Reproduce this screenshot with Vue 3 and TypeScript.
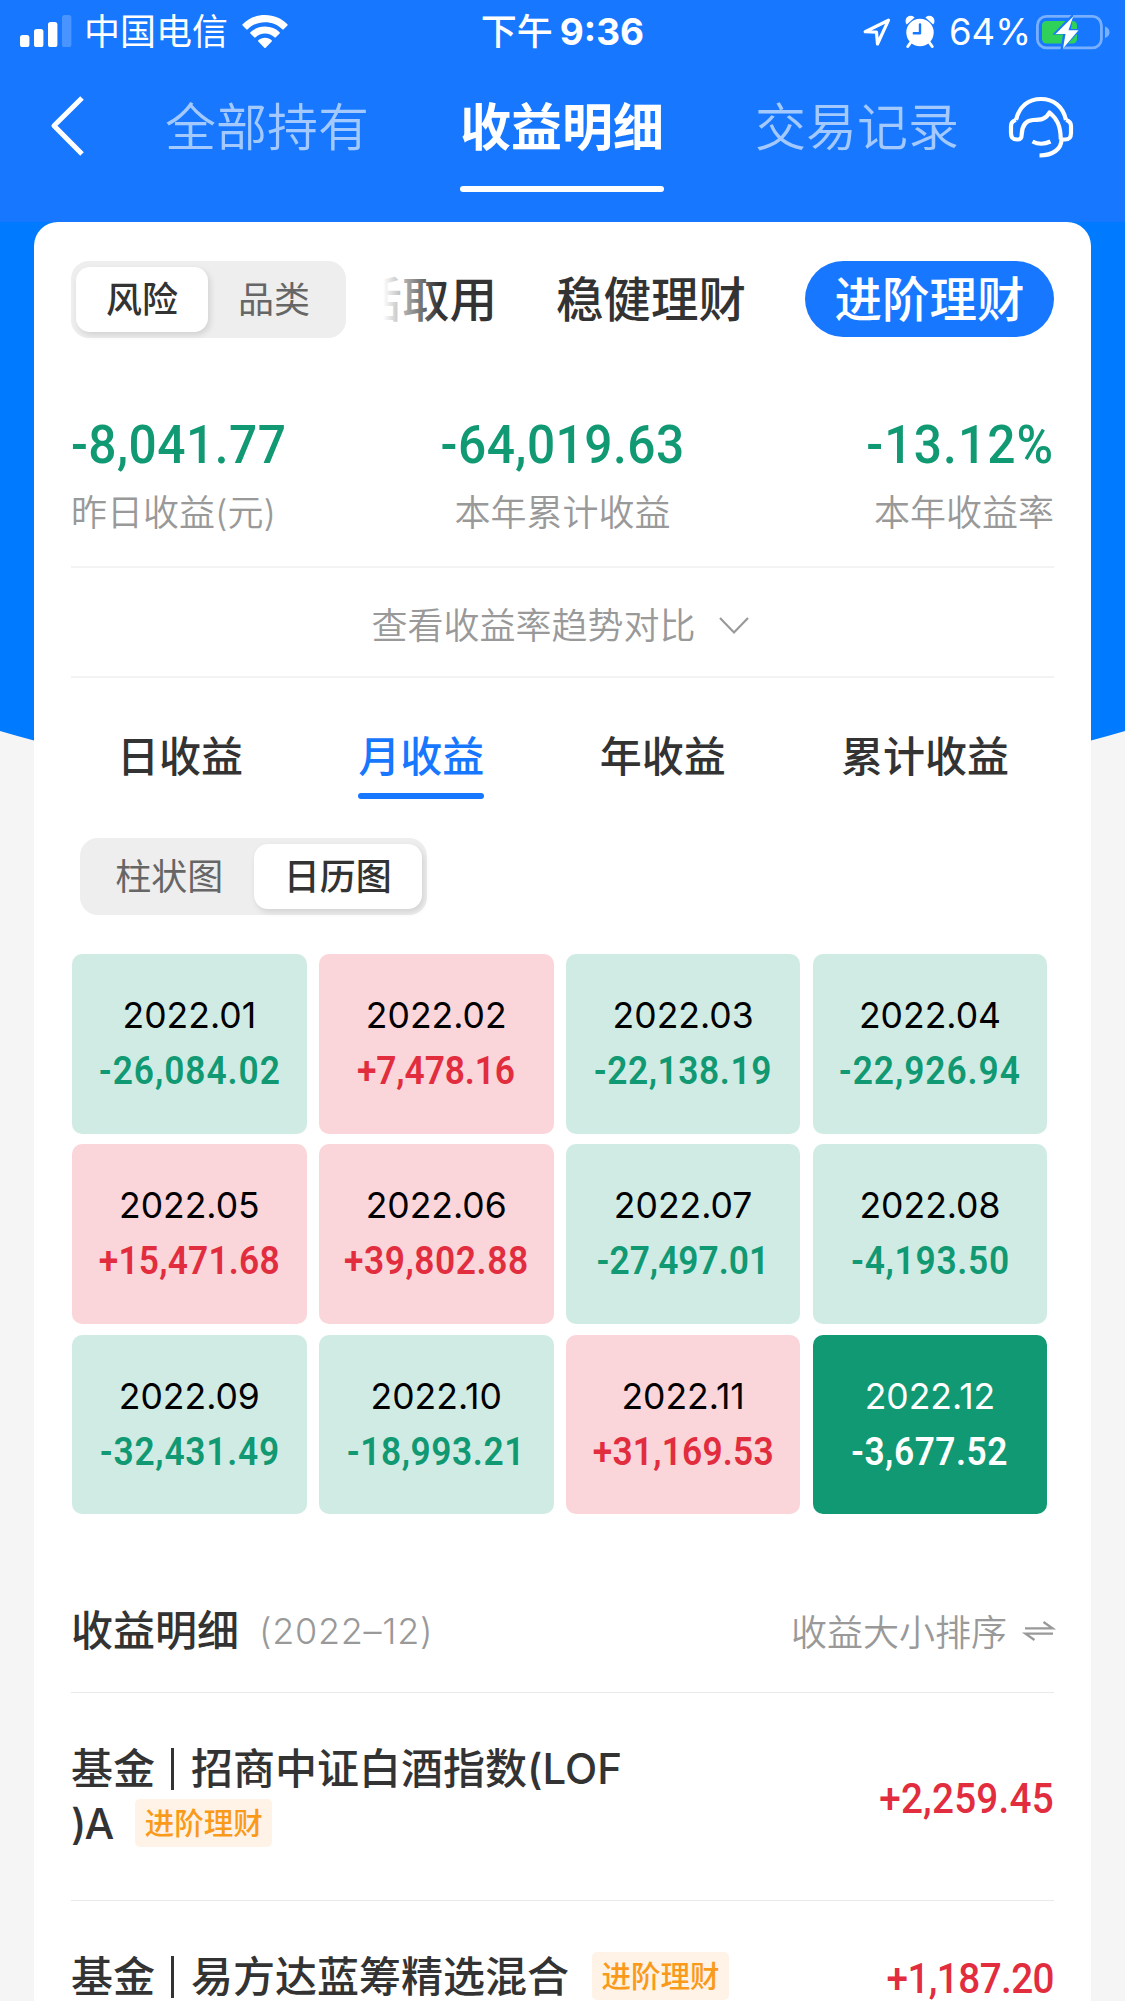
<script setup lang="ts">
interface Stat { value: string; label: string }
interface Month { month: string; amount: string; active?: boolean }
interface Fund { name: string[]; amount: string }

const stats: Stat[] = [
  { value: '-8,041.77', label: '昨日收益(元)' },
  { value: '-64,019.63', label: '本年累计收益' },
  { value: '-13.12%', label: '本年收益率' },
]

const periods: string[] = ['日收益', '月收益', '年收益', '累计收益']

const months: Month[] = [
  { month: '2022.01', amount: '-26,084.02' },
  { month: '2022.02', amount: '+7,478.16' },
  { month: '2022.03', amount: '-22,138.19' },
  { month: '2022.04', amount: '-22,926.94' },
  { month: '2022.05', amount: '+15,471.68' },
  { month: '2022.06', amount: '+39,802.88' },
  { month: '2022.07', amount: '-27,497.01' },
  { month: '2022.08', amount: '-4,193.50' },
  { month: '2022.09', amount: '-32,431.49' },
  { month: '2022.10', amount: '-18,993.21' },
  { month: '2022.11', amount: '+31,169.53' },
  { month: '2022.12', amount: '-3,677.52', active: true },
]

const funds: Fund[] = [
  { name: ['招商中证白酒指数(LOF', ')A'], amount: '+2,259.45' },
  { name: ['易方达蓝筹精选混合'], amount: '+1,187.20' },
]

const tone = (m: Month): string => (m.active ? 'active' : m.amount.startsWith('+') ? 'up' : 'down')

// Tightens amounts that hold narrow ones or a seven next to punctuation.
const tracking = (amount: string, base: number): string => {
  const ones = (amount.match(/1/g) ?? []).length
  const sevens = (amount.match(/7[,.]/g) ?? []).length
  const plus = amount.startsWith('+') ? 1 : 0
  return `${(base - (ones * 2 + sevens * 4 + plus * 4) / amount.length).toFixed(2)}px`
}
</script>

<template>
  <div class="app">
    <svg class="backdrop" width="1125" height="520" viewBox="0 0 1125 520">
      <path d="M0 0H1125V509Q1108 514 1091 518.5H34Q17 514 0 509Z" fill="#007aff" />
    </svg>

    <header class="header">
      <div class="status">
        <div class="status-left">
          <svg width="52" height="34" viewBox="0 0 52 34" fill="#fff">
            <rect x="0" y="20" width="9.4" height="12" rx="2.6" />
            <rect x="14" y="14" width="9.4" height="18" rx="2.6" />
            <rect x="28" y="7" width="9.4" height="25" rx="2.6" />
            <rect x="42" y="0" width="9.4" height="32" rx="2.6" opacity=".22" />
          </svg>
          <span class="carrier">中国电信</span>
          <svg class="wifi" width="46" height="34" viewBox="0 0 46 34" fill="#fff">
            <path d="M23 0C14 0 6 3.600 .6 9.300Q0 10 .6 10.600L4.300 14.300Q5 15 5.700 14.300C10.200 9.800 16.200 7.200 23 7.200S35.800 9.800 40.300 14.300Q41 15 41.700 14.300L45.400 10.600Q46 10 45.400 9.300C40 3.600 32 0 23 0Z" />
            <path d="M23 11.500C17 11.500 12 13.700 8.400 17.200Q7.800 18 8.400 18.600L12.200 22.300Q12.900 23 13.600 22.300C16 20 19.300 18.600 23 18.600S30 20 32.400 22.300Q33.100 23 33.800 22.300L37.600 18.600Q38.200 18 37.600 17.200C34 13.700 29 11.500 23 11.500Z" />
            <path d="M23 22.700C20.400 22.700 18 23.700 16.300 25.200Q15.700 26 16.300 26.600L22.300 32.700Q23 33.400 23.700 32.700L29.700 26.600Q30.300 26 29.700 25.200C28 23.700 25.600 22.700 23 22.700Z" />
          </svg>
        </div>
        <div class="clock">下午<b>9:36</b></div>
        <div class="status-right">
          <svg width="28" height="28" viewBox="0 0 28 28" fill="none" stroke="#fff" stroke-width="3.200" stroke-linejoin="round">
            <path d="M25.500 2.200L2.200 13.700L13.500 14.200L14.500 26Z" />
          </svg>
          <svg class="alarm" width="28" height="33" viewBox="0 0 28 33" fill="#fff">
            <path d="M.8 8.400A5 5 0 0 1 8.600 1.600Z" />
            <path d="M27.200 8.400A5 5 0 0 0 19.400 1.600Z" />
            <circle cx="14" cy="16.500" r="13.700" />
            <path d="M5 26L1.800 30.500M23 26L26.200 30.500" stroke="#fff" stroke-width="3" stroke-linecap="round" />
            <path d="M14 8.500V17.300H7.800" fill="none" stroke="#1777ff" stroke-width="2.400" stroke-linecap="round" stroke-linejoin="round" />
          </svg>
          <span class="percent">64%</span>
          <svg width="74" height="36" viewBox="0 0 74 36">
            <rect x="1.400" y="2.400" width="64" height="31.500" rx="9" fill="none" stroke="#fff" stroke-opacity=".42" stroke-width="2.800" />
            <path d="M69 12.500C72 13.500 73.500 15.500 73.500 18.200S72 23 69 24Z" fill="#fff" opacity=".42" />
            <rect x="6" y="7" width="35" height="22.500" rx="4.500" fill="#30d158" />
            <path d="M37.500 -1L16.500 20.500H27L24 38L45.500 15H35Z" fill="#1777ff" />
            <path d="M37.200 2.500L19.500 20H29.500L27 34.500L42.500 16.200H32.500Z" fill="#fff" />
          </svg>
        </div>
      </div>

      <nav class="nav">
        <svg class="back" width="36" height="60" viewBox="0 0 36 60" fill="none" stroke="#fff" stroke-width="5">
          <path d="M32 2L4 29.800L32 58" stroke-linejoin="round" />
        </svg>
        <span class="nav-tab first">全部持有</span>
        <span class="nav-tab current">收益明细</span>
        <span class="nav-tab last">交易记录</span>
        <svg class="service" width="66" height="66" viewBox="0 0 66 66" fill="none" stroke="#fff" stroke-width="4.200" stroke-linejoin="round">
          <path d="M8 24C11 10.500 20.500 3 33 3S55 10.500 58 24" />
          <path d="M8 24C4.500 25 3 26.500 3 30V37C3 42 5 43.500 9 43.500C12.500 43.500 13.700 42 13.700 38.500C14 29.500 18 24.500 25 24C33 24 38 23 41.500 16.500C49 23 52.500 29 52.800 43.500" />
          <path d="M58 24C61.500 25 63 26.500 63 30V37C63 42 61 43.500 57 43.500H53.500C53.500 53 45 59.500 31.500 59.500" />
          <path d="M24.500 45.500Q33 50 42.500 45.500" />
        </svg>
      </nav>
    </header>

    <main class="card">
      <div class="filters">
        <div class="segment risk">
          <span class="seg on">风险</span>
          <span class="seg">品类</span>
        </div>
        <div class="scroller">
          <span class="chip cut">活取用</span>
          <span class="chip">稳健理财</span>
          <span class="chip pill">进阶理财</span>
        </div>
      </div>

      <section class="stats">
        <div v-for="s in stats" :key="s.label" class="stat">
          <strong>{{ s.value }}</strong>
          <span>{{ s.label }}</span>
        </div>
      </section>

      <div class="compare">
        <span>查看收益率趋势对比</span>
        <svg width="32" height="20" viewBox="0 0 32 20" fill="none" stroke="#999" stroke-width="2.200">
          <path d="M2 2L16 16.500L30 2" />
        </svg>
      </div>

      <div class="periods">
        <span v-for="(p, i) in periods" :key="p" class="period" :class="{ selected: i === 1 }">{{ p }}</span>
      </div>

      <div class="segment chart">
        <span class="seg">柱状图</span>
        <span class="seg on">日历图</span>
      </div>

      <section class="calendar">
        <div v-for="m in months" :key="m.month" class="cell" :class="tone(m)">
          <span class="month">{{ m.month }}</span>
          <span class="amount" :style="{ letterSpacing: tracking(m.amount, 1) }">{{ m.amount }}</span>
        </div>
      </section>

      <div class="detail-head">
        <h2>收益明细</h2>
        <span class="range">(2022–12)</span>
        <span class="sort">收益大小排序</span>
        <svg width="30" height="22" viewBox="0 0 30 22" fill="none" stroke="#999" stroke-width="2.300">
          <path d="M1 8.300H28.500L19.500 2M29 13.700H1.500L10.500 20" />
        </svg>
      </div>

      <div v-for="f in funds" :key="f.amount" class="fund">
        <div class="fund-name">
          <div class="line">
            <span>基金</span><i class="bar"></i><span>{{ f.name[0] }}</span>
            <em v-if="f.name.length === 1" class="tag">进阶理财</em>
          </div>
          <div v-if="f.name.length > 1" class="line">
            <span class="tail">{{ f.name[1] }}</span>
            <em class="tag">进阶理财</em>
          </div>
        </div>
        <span class="fund-amount" :style="{ letterSpacing: tracking(f.amount, 0.7) }">{{ f.amount }}</span>
      </div>
    </main>
  </div>
</template>

<style>
body { margin: 0; background: #f5f5f5; }
</style>

<style scoped>
.app {
  position: relative;
  width: 1125px;
  height: 2001px;
  overflow: hidden;
  background: #f5f5f5;
  color: #333;
  font-family: Inter, "Noto Sans CJK SC", sans-serif;
  white-space: nowrap;
}
.app svg { display: block; flex: none; overflow: visible; }
.app .backdrop { position: absolute; left: 0; top: 222px; }

.header { position: relative; height: 222px; background: #1777ff; color: #fff; }
.status { display: grid; grid-template-columns: 1fr auto 1fr; align-items: center; height: 62px; padding: 0 15px 0 20px; font-size: 36px; line-height: 64px; }
.status-left, .status-right { display: flex; align-items: center; }
.status-left svg { margin-top: -1px; }
.carrier { margin-left: 12px; }
.wifi { margin-left: 14px; }
.clock { padding-right: 5px; font-weight: 500; }
.clock b { margin-left: 7px; font-size: 37px; font-weight: 700; }
.status-right { justify-content: flex-end; }
.alarm { margin-left: 15px; }
.percent { margin: 0 5px 0 15px; font-size: 36.500px; }

.nav { display: flex; height: 160px; align-items: flex-start; font-size: 51px; }
.back { margin: 34px 0 0 50px; }
.nav-tab { height: 130px; line-height: 132px; box-sizing: border-box; font-weight: 350; color: #a3c9ff; }
.first { margin-left: 79px; }
.current { margin-left: 91px; color: #fff; font-weight: 700; position: relative; }
.current::after { content: ""; position: absolute; left: 0; right: 0; bottom: 0; height: 6px; border-radius: 3px; background: #fff; }
.last { margin-left: 91px; }
.service { margin: 34px 0 0 49px; }

.card { position: relative; box-sizing: border-box; width: 1057px; height: 1800px; margin: 0 34px; padding: 39px 37px 0; background: #fff; border-radius: 24px 24px 0 0; }
.filters { display: flex; height: 77px; }
.segment { display: flex; box-sizing: border-box; height: 77px; padding: 6px 5px; border-radius: 18px; background: #eee; font-size: 36px; line-height: 67px; color: #666; }
.seg { height: 65px; border-radius: 14px; text-align: center; }
.seg.on { background: #fff; color: #333; font-weight: 500; box-shadow: 2px 3px 6px rgba(0, 0, 0, .12); }
.risk { width: 275px; }
.risk .seg { width: 132px; }
.scroller { position: relative; display: flex; justify-content: flex-end; width: 671px; margin-left: 37px; overflow: hidden; font-size: 47.500px; font-weight: 500; line-height: 78px; }
.scroller::before { content: ""; position: absolute; left: 0; top: 0; width: 56px; height: 100%; background: linear-gradient(90deg, #fff, rgba(255, 255, 255, 0)); }
.chip { flex: none; margin-right: 59px; }
.pill { margin: 0; width: 249px; height: 76px; border-radius: 38px; text-align: center; background: #1777ff; color: #fff; }

.stats { display: grid; grid-template-columns: repeat(3, 1fr); height: 230px; padding-top: 73px; box-sizing: border-box; border-bottom: 2px solid #f3f3f3; }
.stat { display: flex; flex-direction: column; align-items: center; }
.stat:first-child { align-items: flex-start; }
.stat:last-child { align-items: flex-end; }
.stat strong { font: 500 54px/68px Roboto, sans-serif; color: #109972; letter-spacing: .5px; transform: scaleX(.92); }
.stat:first-child strong { transform-origin: left; }
.stat:last-child strong { transform-origin: right; letter-spacing: 1.200px; }
.stat span { font-size: 36px; font-weight: 350; line-height: 69px; color: #999; }

.compare { display: flex; align-items: center; justify-content: center; gap: 22px; height: 110px; padding: 8px 4px 0 0; box-sizing: border-box; border-bottom: 2px solid #f3f3f3; font-size: 36px; font-weight: 350; line-height: 100px; color: #999; }

.periods { display: flex; justify-content: space-between; margin: 0 45px 0 46px; height: 121px; font-size: 42px; font-weight: 500; }
.period { height: 121px; line-height: 158px; }
.selected { color: #1777ff; position: relative; }
.selected::after { content: ""; position: absolute; left: 0; right: 0; bottom: 0; height: 6px; border-radius: 3px; background: #1777ff; }

.chart { width: 347px; margin: 39px 0 0 9px; }
.chart .seg { width: 169px; }
.chart .seg:first-child { color: #666; }

.calendar { display: grid; grid-template-columns: repeat(4, 234.700px); grid-auto-rows: 179.600px; gap: 10.800px 12.200px; margin: 39px 0 0 1px; }
.cell { display: flex; flex-direction: column; align-items: center; box-sizing: border-box; padding-top: 35px; border-radius: 10px; }
.month { font-size: 35.500px; font-weight: 380; line-height: 54px; color: #000; }
.amount { margin-top: 1px; font: 600 38px/54px Roboto, sans-serif; transform: scaleX(.93); }
.down { background: #d0ebe3; color: #109972; }
.up { background: #fad5d9; color: #e12d3e; }
.active { background: #109972; color: #fff; }
.active .month { color: #fff; }

.detail-head { display: flex; align-items: center; height: 178.400px; padding-top: 56px; box-sizing: border-box; border-bottom: 1px solid #e9e9e9; color: #999; font-size: 36px; font-weight: 350; }
.detail-head h2 { margin: 0 20px 0 0; color: #333; font-size: 42px; font-weight: 500; line-height: 60px; }
.range { letter-spacing: .7px; }
.sort { margin: -2px 17px 0 auto; }

.fund { display: flex; justify-content: space-between; align-items: center; height: 208px; box-sizing: border-box; border-bottom: 1px solid #e9e9e9; }
.fund:last-child { height: 153px; }
.line { display: flex; align-items: center; height: 55px; font-size: 42px; font-weight: 500; line-height: 55px; }
.tail { letter-spacing: -2px; }
.bar { width: 3px; height: 42px; margin: 0 17px 0 16px; background: #333; }
.tag { box-sizing: border-box; width: 137px; height: 48px; margin: -1px 0 0 23px; border-radius: 5px; background: #fef3e6; color: #fa9a1a; font-size: 29.500px; font-style: normal; font-weight: 500; line-height: 48px; text-align: center; }
.fund-amount { font: 500 42px/55px Roboto, sans-serif; transform: scaleX(.92); transform-origin: right; padding-top: 4px; color: #e12d3e; }
</style>
